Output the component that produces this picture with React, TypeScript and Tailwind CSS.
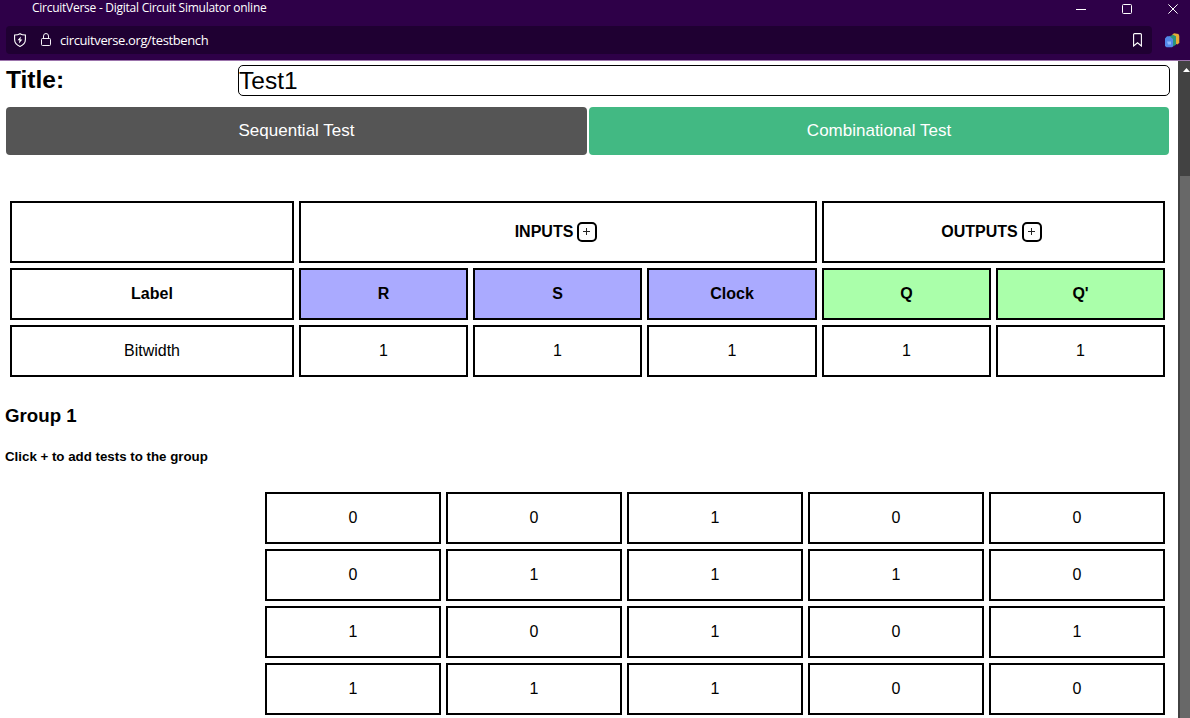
import React from "react";

const cell = "flex items-center justify-center border-2 border-black";

const labels = [
  { name: "R", input: true },
  { name: "S", input: true },
  { name: "Clock", input: true },
  { name: "Q", input: false },
  { name: "Q'", input: false },
];

const tests = [
  [0, 0, 1, 0, 0],
  [0, 1, 1, 1, 0],
  [1, 0, 1, 0, 1],
  [1, 1, 1, 0, 0],
];

function AddButton() {
  return (
    <button
      aria-label="Add"
      className="ml-1 flex size-5 items-center justify-center rounded-[5px] border-2 border-black bg-white pr-px pb-px"
    >
      <svg width="7" height="7" viewBox="0 0 7 7" stroke="#222" shapeRendering="crispEdges">
        <path d="M0 3.5h7M3.5 0v7" />
      </svg>
    </button>
  );
}

function BrowserChrome() {
  return (
    <header className="h-[61px] shrink-0 border-b border-[#9c74ac] bg-[#2e0048] font-['Open_Sans',sans-serif] text-white">
      <div className="flex h-[26px] items-start pr-3 pl-8">
        <span className="text-[12px] leading-[16px] tracking-[-0.26px] whitespace-nowrap">
          CircuitVerse - Digital Circuit Simulator online
        </span>
        <div className="ml-auto flex items-center pt-1 text-white">
          <svg width="10" height="10" viewBox="0 0 10 10" stroke="currentColor" fill="none">
            <path d="M0 5.5h10" />
          </svg>
          <svg className="ml-9" width="10" height="10" viewBox="0 0 10 10" stroke="currentColor" fill="none">
            <rect x=".5" y=".5" width="9" height="9" rx="1" />
          </svg>
          <svg className="ml-9" width="10" height="10" viewBox="0 0 10 10" stroke="currentColor" fill="none">
            <path d="M.4.4l9.2 9.2M9.6.4L.4 9.6" />
          </svg>
        </div>
      </div>
      <div className="flex items-center">
        <div className="ml-1.5 flex h-7 w-[1146px] items-center rounded-sm bg-[#1f0032] pr-[10px] pl-2">
          <svg width="12" height="14" viewBox="0 0 12 14" fill="none" stroke="#fff" strokeWidth="1.1">
            <path d="M6 .7C4.500 1.700 2.700 2 .6 2v4.500C.6 9.800 2.600 12 6 13.400c3.400-1.400 5.400-3.600 5.400-6.900V2C9.300 2 7.500 1.700 6 .7z" />
            <path d="M6.900 3.400L3.500 7.300h2l-.6 3.100 3.500-4h-2z" fill="#fff" stroke="none" />
          </svg>
          <svg className="mb-0.5 ml-[15px]" width="10" height="13" viewBox="0 0 10 13" fill="none" stroke="#f4f0f6">
            <rect x=".5" y="5.500" width="9" height="7" rx="1" />
            <path d="M2.500 5.500V3a2.500 2.500 0 0 1 5 0v2.500" />
          </svg>
          <span className="ml-[9px] text-[13px] leading-4 tracking-[-0.38px] whitespace-nowrap">
            circuitverse.org/testbench
          </span>
          <svg className="mb-px ml-auto" width="9" height="14" viewBox="0 0 9 14" fill="none" stroke="#fff" strokeWidth="1.1">
            <path d="M.6 13V1.600a1 1 0 0 1 1-1h5.800a1 1 0 0 1 1 1V13L4.500 9.800z" />
          </svg>
        </div>
        <svg className="ml-[13px]" width="15" height="15" viewBox="0 0 15 15">
          <path d="M7 2l2-1.800 4.500.8L14.300 3v7l-2 1.500L7 9z" fill="#e5ac35" />
          <path d="M4 3.500l4-1.700 3 1.400v8.600L8 13.500 4 11z" fill="#2b9479" />
          <path d="M0 5.500l2-2.200h2.700l1.400 1.200L8 6v7.500L7 14.200H1.500L0 13z" fill="#5288e8" />
          <path d="M2 8.500h4v3H3z" fill="#8db7ff" />
        </svg>
      </div>
    </header>
  );
}

export default function App() {
  return (
    <div className="flex h-[718px] w-[1190px] flex-col overflow-hidden bg-white font-['Liberation_Sans',Arial,sans-serif] text-black">
      <BrowserChrome />
      <div className="flex min-h-0 flex-1">
        <main className="w-[1178px] overflow-hidden">
          <div className="flex h-[46px] pt-1 pl-1.5">
            <label htmlFor="title" className="w-[232px] text-[24.500px] leading-[30px] font-bold">
              Title:
            </label>
            <input
              id="title"
              defaultValue="Test1"
              className="h-[31px] w-[932px] rounded-[5px] border border-black text-[24.500px] leading-[29px]"
            />
          </div>
          <div className="flex gap-0.5 pl-1.5 text-[17px] text-white">
            <button className="h-12 w-[581px] rounded-[4px] bg-[#555] pb-px">Sequential Test</button>
            <button className="h-12 w-[580px] rounded-[4px] bg-[#42b983] pb-px">Combinational Test</button>
          </div>

          <div className="mt-[46px] ml-2.5 grid w-[1155px] grid-cols-[284px_169px_169px_170px_169px_169px] grid-rows-[62px_52px_52px] gap-[5px] text-[16px]">
            <div className={cell} />
            <div className={`${cell} col-span-3 pr-1 font-bold`}>
              INPUTS
              <AddButton />
            </div>
            <div className={`${cell} col-span-2 pr-1 font-bold`}>
              OUTPUTS
              <AddButton />
            </div>
            <div className={`${cell} font-bold`}>Label</div>
            {labels.map((l) => (
              <div key={l.name} className={`${cell} font-bold ${l.input ? "bg-[#aaf]" : "bg-[#afa]"}`}>
                {l.name}
              </div>
            ))}
            <div className={cell}>Bitwidth</div>
            {labels.map((l) => (
              <div key={l.name} className={cell}>
                1
              </div>
            ))}
          </div>

          <h3 className="mt-7 ml-[5px] text-[18.700px] leading-[22px] font-bold">Group 1</h3>
          <h5 className="mt-[22px] ml-[5px] text-[13.300px] leading-4 font-bold">Click + to add tests to the group</h5>

          <div className="mt-[27px] ml-[265px] grid w-[900px] grid-cols-5 gap-[5px] text-[16px]">
            {tests.flatMap((row, r) =>
              row.map((v, c) => (
                <div key={`${r}-${c}`} className={`${cell} h-[52px]`}>
                  {v}
                </div>
              )),
            )}
          </div>
        </main>
        <div className="flex w-3 flex-col bg-[#424242] pl-0.5">
          <svg className="mt-[7px] ml-[3px]" width="7" height="4" viewBox="0 0 7 4" fill="#fff">
            <path d="M3.500 0L7 4H0z" />
          </svg>
          <div className="mt-[104px] flex-1 bg-[#686868]" />
        </div>
      </div>
    </div>
  );
}
